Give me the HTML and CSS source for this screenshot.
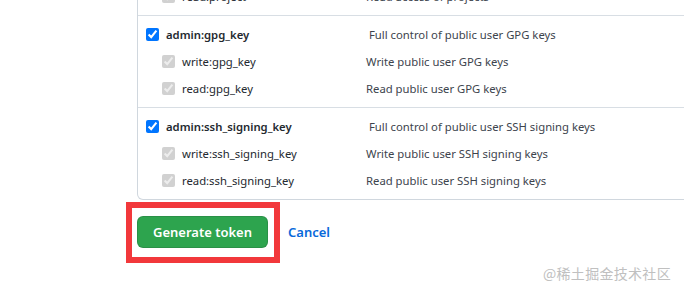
FILE: index.html
```html
<!DOCTYPE html>
<html lang="en">
<head>
<meta charset="utf-8">
<title>New personal access token</title>
<link rel="stylesheet" href="styles.css">
</head>
<body>
<div class="page">
  <div class="scopes">
    <div class="group group-first">
      <div class="row sub">
        <label class="name"><input type="checkbox" checked disabled>read:project</label>
        <span class="desc">Read access of projects</span>
      </div>
    </div>
    <div class="group">
      <div class="row parent">
        <label class="name"><input type="checkbox" checked>admin:gpg_key</label>
        <span class="desc">Full control of public user GPG keys</span>
      </div>
      <div class="row sub">
        <label class="name"><input type="checkbox" checked disabled>write:gpg_key</label>
        <span class="desc">Write public user GPG keys</span>
      </div>
      <div class="row sub">
        <label class="name"><input type="checkbox" checked disabled>read:gpg_key</label>
        <span class="desc">Read public user GPG keys</span>
      </div>
    </div>
    <div class="group">
      <div class="row parent">
        <label class="name"><input type="checkbox" checked>admin:ssh_signing_key</label>
        <span class="desc">Full control of public user SSH signing keys</span>
      </div>
      <div class="row sub">
        <label class="name"><input type="checkbox" checked disabled>write:ssh_signing_key</label>
        <span class="desc">Write public user SSH signing keys</span>
      </div>
      <div class="row sub">
        <label class="name"><input type="checkbox" checked disabled>read:ssh_signing_key</label>
        <span class="desc">Read public user SSH signing keys</span>
      </div>
    </div>
  </div>
  <div class="actions">
    <span class="highlight"><button class="btn-primary" type="button">Generate token</button></span>
    <a class="cancel" href="#">Cancel</a>
  </div>
</div>
<div class="watermark">@稀土掘金技术社区</div>
</body>
</html>
```
FILE: styles.css
```css
html, body {
  margin: 0;
  padding: 0;
  overflow: hidden;
  background: #ffffff;
}
body {
  width: 684px;
  height: 290px;
  position: relative;
  font-family: "Segoe UI", "Noto Sans", "Liberation Sans", sans-serif;
  color: #24292f;
}
.page {
  padding-left: 137px;
}
.scopes {
  width: 620px;
  margin-top: -17px;
  border: 1px solid #d0d7de;
  border-top: none;
  border-radius: 0 0 6px 6px;
}
.group {
  padding: 5px 0 5px 8px;
  border-top: 1px solid #d8dee4;
}
.group-first {
  border-top: none;
  padding-top: 0;
}
.row {
  display: grid;
  grid-template-columns: 220px 1fr;
  align-items: center;
  height: 27px;
  font-size: 11.3px;
}
.name {
  display: flex;
  align-items: center;
  color: #24292f;
}
.name input {
  margin: 0 7px 0 0;
  width: 13px;
  height: 13px;
}
.parent .name {
  font-weight: 600;
}
.sub .name {
  padding-left: 16px;
}
.desc {
  color: #3d444d;
}
.parent .desc {
  padding-left: 3px;
}
.actions {
  display: flex;
  align-items: center;
  margin-top: 16px;
}
.highlight {
  position: relative;
  display: inline-flex;
}
.highlight::after {
  content: "";
  position: absolute;
  left: -11px;
  top: -14px;
  right: -12px;
  bottom: -15px;
  border: 6px solid #f2383b;
  pointer-events: none;
}
.btn-primary {
  width: 131px;
  height: 32px;
  border: 1px solid rgba(27, 31, 36, 0.15);
  border-radius: 6px;
  background: #2da44e;
  color: #ffffff;
  font-family: inherit;
  font-size: 13px;
  font-weight: 600;
  padding: 0;
}
.cancel {
  margin-left: 20px;
  font-size: 13px;
  font-weight: 600;
  color: #0969da;
  text-decoration: none;
}
.watermark {
  position: absolute;
  left: 543px;
  top: 263px;
  font-family: "Noto Sans CJK SC", sans-serif;
  font-size: 14px;
  color: #c0c0c0;
  letter-spacing: 0.3px;
}
```
